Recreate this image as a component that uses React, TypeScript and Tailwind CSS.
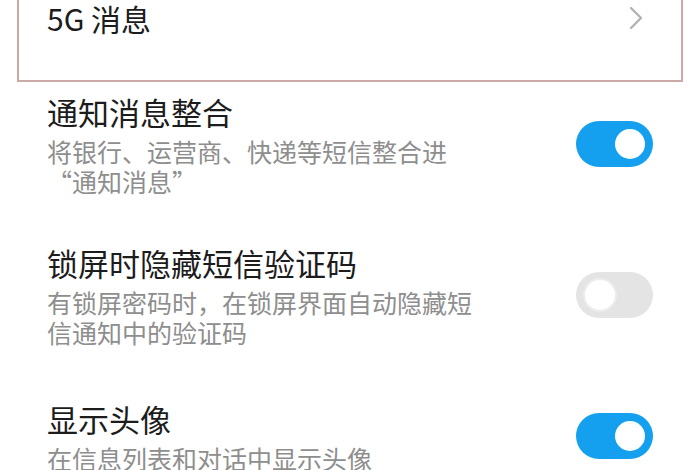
import React from "react";

const font = { fontFamily: '"Noto Sans CJK SC", "Noto Sans", sans-serif' };

function Toggle({ on }: { on: boolean }) {
  return (
    <div
      className={`relative w-[77px] h-[46px] rounded-full shrink-0 ${
        on ? "bg-[#14a0ef]" : "bg-[#e4e4e4]"
      }`}
    >
      <div
        className={`absolute top-[8px] w-[30px] h-[30px] rounded-full bg-white ${
          on ? "right-[8px]" : "left-[9px] shadow-[0_0_0_2px_#ececec]"
        }`}
      />
    </div>
  );
}

function Row({
  title,
  lines,
  on,
  className,
}: {
  title: string;
  lines: string[];
  on: boolean;
  className?: string;
}) {
  return (
    <div className={`flex items-center pl-[47px] pr-[47px] ${className ?? ""}`}>
      <div className="flex-1">
        <div className="text-[31px] leading-[40px] text-[#1c1c1c]">{title}</div>
        <div className="mt-[4px]">
          {lines.map((l, i) => (
            <div key={i} className="text-[25px] leading-[30px] text-[#8e8e8e] whitespace-nowrap">
              {l}
            </div>
          ))}
        </div>
      </div>
      <Toggle on={on} />
    </div>
  );
}

export default function App() {
  return (
    <div className="w-[700px] h-[470px] bg-white overflow-hidden" style={font}>
      <div className="mx-[17px] h-[82px] border-x-2 border-b-2 border-[#c9aaa6] bg-white">
        <div className="flex items-center justify-between pl-[28px] pr-[38px] h-[36px]">
          <span className="text-[30px] leading-[36px] text-[#1c1c1c]">5G 消息</span>
          <svg width="14" height="24" viewBox="0 0 14 24" fill="none">
            <path d="M2 2 L12 12 L2 22" stroke="#b3b3b3" strokeWidth="2.4" strokeLinecap="round" strokeLinejoin="round" />
          </svg>
        </div>
      </div>
      <Row
        className="mt-[10px]"
        title="通知消息整合"
        lines={["将银行、运营商、快递等短信整合进", "“通知消息”"]}
        on={true}
      />
      <Row
        className="mt-[47px]"
        title="锁屏时隐藏短信验证码"
        lines={["有锁屏密码时，在锁屏界面自动隐藏短", "信通知中的验证码"]}
        on={false}
      />
      <Row
        className="mt-[52px]"
        title="显示头像"
        lines={["在信息列表和对话中显示头像"]}
        on={true}
      />
    </div>
  );
}
